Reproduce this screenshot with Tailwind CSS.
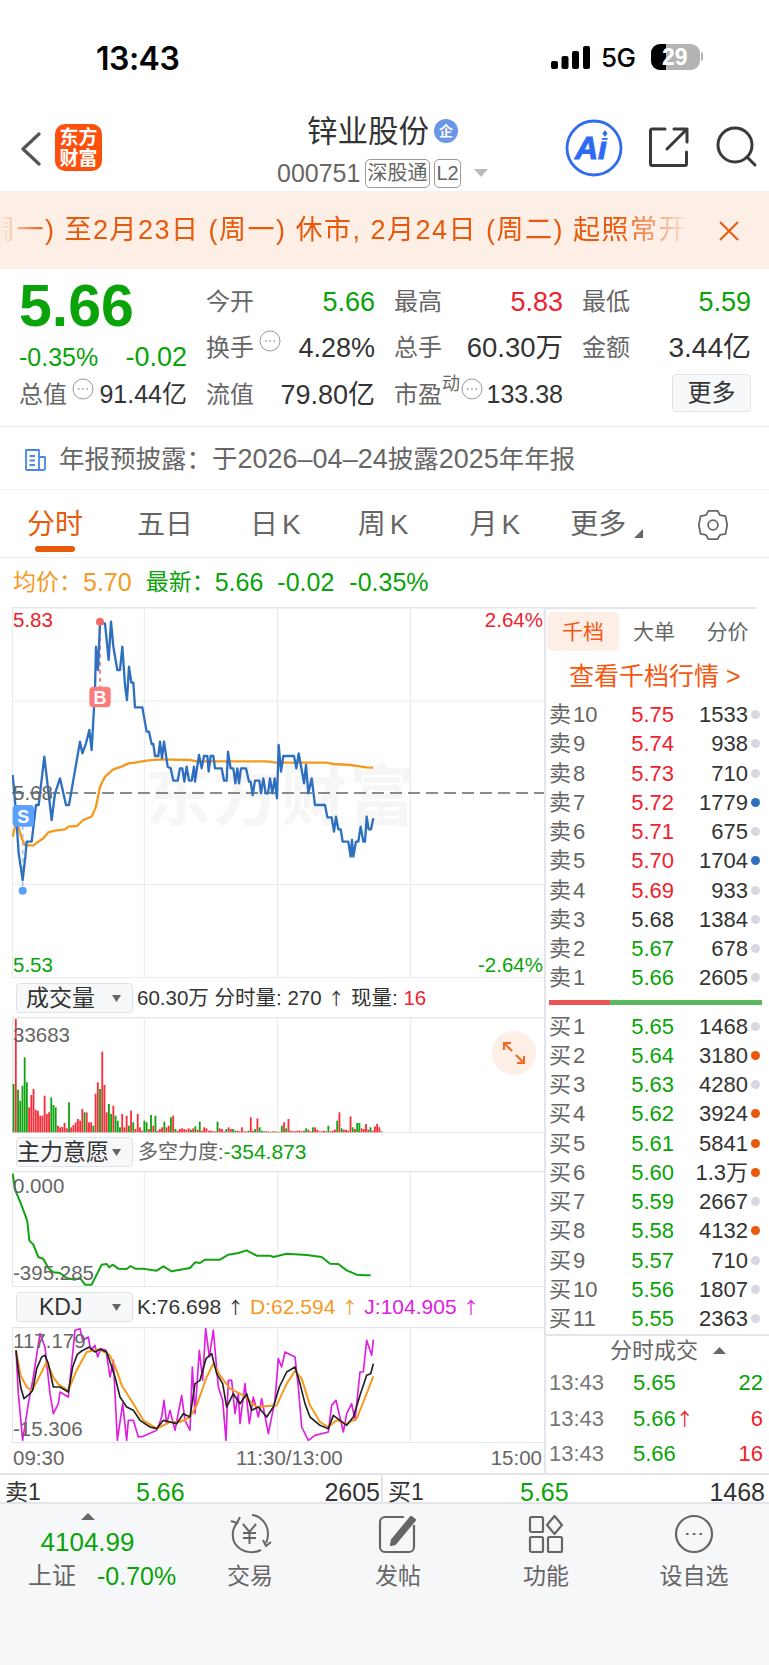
<!DOCTYPE html>
<html lang="zh-CN">
<head>
    <meta charset="UTF-8">
    <meta name="viewport" content="width=device-width, initial-scale=1.0">
    <title>锌业股份</title>
    <script src="https://cdn.jsdelivr.net/npm/@tailwindcss/browser@4"></script>
</head>
<body class="bg-white font-['Liberation_Sans','Noto_Sans_CJK_SC',sans-serif] text-[#333]">
<div class="w-[769px] h-[1665px] overflow-hidden flex flex-col">

    <!-- status bar -->
    <div class="h-[105px] shrink-0 flex items-start pt-[40px] text-black">
        <div class="ml-[96px] w-[90px] h-[38px] leading-[38px] font-['Inter'] font-semibold text-[32px] tracking-[-0.5px]">13:43</div>
        <svg class="ml-[365px] mt-[6px]" width="39" height="23" viewBox="0 0 39 23" fill="#000">
            <rect x="0" y="15" width="7" height="8" rx="2"/><rect x="10.500" y="10" width="7" height="13" rx="2"/><rect x="21" y="5" width="7" height="18" rx="2"/><rect x="32" y="0" width="7" height="23" rx="2"/>
        </svg>
        <div class="ml-[11px] w-[38px] h-[36px] leading-[36px] text-[26px] font-['Inter'] font-medium tracking-[-0.5px]">5G</div>
        <div class="relative ml-[12px] mt-[4px] w-[49px] h-[26px] rounded-[9px] bg-[#b4b4b4] overflow-hidden">
            <div class="absolute left-0 top-0 bottom-0 w-[15px] bg-black"></div>
            <div class="absolute inset-0 pl-[11px] leading-[26px] text-[23px] font-bold text-white">29</div>
        </div>
        <div class="mt-[12px] ml-[1px] w-[2px] h-[9px] rounded-r bg-[#b4b4b4]"></div>
    </div>

    <!-- header -->
    <div class="h-[86px] shrink-0 flex">
        <div class="w-[277px] flex items-start pt-[19px]">
            <svg class="ml-[20px] mt-[8px]" width="22" height="34" viewBox="0 0 22 34" fill="none" stroke="#555" stroke-width="3.200" stroke-linecap="round" stroke-linejoin="round"><path d="M19 2 L3 17 L19 32"/></svg>
            <div class="ml-[13px] w-[47px] h-[47px] rounded-[10px] bg-[#ff4f0d] flex flex-col items-center justify-center text-white font-bold text-[19px] leading-[21px]">
                <span>东方</span><span>财富</span>
            </div>
        </div>
        <div class="w-[289px] flex flex-col pt-[8px]">
            <div class="flex items-center h-[36px]">
                <span class="ml-[30px] text-[30.500px] leading-[36px] text-[#333]">锌业股份</span>
                <span class="ml-[5px] w-[24px] h-[24px] rounded-full bg-[#6b96e8] text-white text-[14px] font-bold flex items-center justify-center">企</span>
            </div>
            <div class="flex items-center mt-[9px] text-[#666]">
                <span class="w-[88px] text-[25px] leading-[30px]">000751</span>
                <span class="w-[65px] h-[29px] border border-[#999] rounded-[5px] text-[20px] leading-[27px] text-center">深股通</span>
                <span class="ml-[4px] w-[27px] h-[29px] border border-[#999] rounded-[5px] text-[20px] leading-[27px] text-center">L2</span>
                <svg class="ml-[13px]" width="14" height="8" viewBox="0 0 14 8"><path d="M0 0 H14 L7 8 Z" fill="#bbb"/></svg>
            </div>
        </div>
        <div class="flex items-start pt-[14px]">
            <svg class="ml-[-1px]" width="58" height="58" viewBox="0 0 58 58">
                <circle cx="29" cy="29" r="27" fill="#fff" stroke="#2f6bf0" stroke-width="2.800"/>
                <text x="10" y="40" font-family="Liberation Sans" font-size="32" font-weight="700" font-style="italic" fill="#2f6bf0" stroke="#2f6bf0" stroke-width="1">Ai</text>
                <rect x="33" y="10" width="13" height="9" fill="#fff"/>
                <path d="M40 11 L42.500 14.500 L40 18 L37.500 14.500 Z" fill="#2f6bf0"/>
            </svg>
            <svg class="ml-[26px] mt-[7px]" width="41" height="42" viewBox="0 0 41 42" fill="none" stroke="#3a3a3a" stroke-width="3" stroke-linejoin="round" stroke-linecap="round">
                <path d="M16 3 H3 a1.500 1.500 0 0 0 -1.500 1.500 V38 a1.500 1.500 0 0 0 1.500 1.500 H36 a1.500 1.500 0 0 0 1.500 -1.500 V26"/>
                <path d="M18 23 L37 4 M25 3 H38 V16"/>
            </svg>
            <svg class="ml-[26px] mt-[7px]" width="42" height="42" viewBox="0 0 42 42" fill="none" stroke="#3a3a3a" stroke-width="3" stroke-linecap="round">
                <circle cx="19" cy="19" r="17"/><path d="M31 31 L39 39"/>
            </svg>
        </div>
    </div>

    <!-- market notice -->
    <div class="h-[78px] shrink-0 bg-[#fdeee6] border-t border-[#f0f0f0] flex items-center relative">
        <div class="w-[690px] overflow-hidden whitespace-nowrap text-[#e8590c] text-[27px] tracking-[1.500px] [mask-image:linear-gradient(to_right,transparent_0,black_45px,black_620px,transparent_690px)]">
            <span class="inline-block ml-[-12px]">周一) 至2月23日 (周一) 休市, 2月24日 (周二) 起照常开市</span>
        </div>
        <svg class="ml-[28px]" width="22" height="22" viewBox="0 0 22 22" fill="none" stroke="#e8590c" stroke-width="2"><path d="M2 2 L20 20 M20 2 L2 20"/></svg>
    </div>

    <!-- quote stats -->
    <div class="h-[158px] shrink-0 pt-[10px] pl-[19px] border-b border-[#eee]">
        <div class="grid grid-cols-[168px_169px_169px_169px] grid-rows-[46px_46px_48px] gap-x-[19px] text-[27px] text-[#666]">
            <div class="row-span-2 flex flex-col text-[#0aa30a] text-[25px]">
                <div class="text-[59px] font-bold leading-[52px] mt-[1px]">5.66</div>
                <div class="flex justify-between items-center mt-[10px] leading-[30px]"><span>-0.35%</span><span class="text-[27px]">-0.02</span></div>
            </div>
            <div class="flex justify-between items-center"><span class="text-[24px]">今开</span><span class="text-[#0aa30a]">5.66</span></div>
            <div class="flex justify-between items-center"><span class="text-[24px]">最高</span><span class="text-[#f0212e]">5.83</span></div>
            <div class="flex justify-between items-center"><span class="text-[24px]">最低</span><span class="text-[#0aa30a]">5.59</span></div>

            <div class="flex justify-between items-center">
                <span class="text-[24px] flex items-start">换手<svg class="ml-[5px]" width="22" height="22" viewBox="0 0 22 22" fill="none" stroke="#999"><circle cx="11" cy="11" r="10"/><path d="M6 11h1.500M10.200 11h1.500M14.500 11h1.500" stroke-width="1.500"/></svg></span>
                <span class="text-[#333]">4.28%</span>
            </div>
            <div class="flex justify-between items-center"><span class="text-[24px]">总手</span><span class="text-[#333] text-[27.500px]">60.30万</span></div>
            <div class="flex justify-between items-center"><span class="text-[24px]">金额</span><span class="text-[#333] text-[28px]">3.44亿</span></div>

            <div class="flex justify-between items-center">
                <span class="text-[24px] flex items-start">总值<svg class="ml-[5px] mt-[1px]" width="22" height="22" viewBox="0 0 22 22" fill="none" stroke="#999"><circle cx="11" cy="11" r="10"/><path d="M6 11h1.500M10.200 11h1.500M14.500 11h1.500" stroke-width="1.500"/></svg></span>
                <span class="text-[#333] text-[25px]">91.44亿</span>
            </div>
            <div class="flex justify-between items-center"><span class="text-[24px]">流值</span><span class="text-[#333]">79.80亿</span></div>
            <div class="flex justify-between items-center">
                <span class="text-[24px] flex items-start">市盈<span class="text-[18px] leading-[22px] mt-[-4px]">动</span><svg class="mt-[1px] ml-[1px]" width="22" height="22" viewBox="0 0 22 22" fill="none" stroke="#999"><circle cx="11" cy="11" r="10"/><path d="M6 11h1.500M10.200 11h1.500M14.500 11h1.500" stroke-width="1.500"/></svg></span>
                <span class="text-[#333] text-[25px] ml-[-4px]">133.38</span>
            </div>
            <div class="flex justify-end items-center">
                <button class="w-[79px] h-[38px] mb-[4px] rounded-[4px] bg-[#f7f8fa] border border-[#dfe2e7] text-[24px] text-[#333]">更多</button>
            </div>
        </div>
    </div>

    <!-- disclosure notice -->
    <div class="h-[63px] shrink-0 flex items-center pl-[24px] pt-[3px] border-b border-[#eee] text-[25.500px] text-[#666]">
        <svg width="23" height="24" viewBox="0 0 23 24" fill="none" stroke="#4a86e8" stroke-width="1.800" stroke-linejoin="round"><path d="M2 2 H15 V22 H3 a1 1 0 0 1 -1 -1 Z M15 9 H21 V20 a2 2 0 0 1 -2 2 H15 M5.500 8 H11 M5.500 12.500 H11 M5.500 17 H11"/></svg>
        <span class="ml-[12px]">年报预披露：于<span class="text-[27px]">2026–04–24</span>披露<span class="text-[27px]">2025</span>年年报</span>
    </div>

    <!-- period tabs -->
    <div class="h-[68px] shrink-0 relative flex items-center pl-[27px] pt-[3px] border-b border-[#eee] text-[28px] text-[#666]">
        <span class="text-[#e8590c]">分时</span>
        <span class="ml-[54px]">五日</span>
        <span class="ml-[57px]">日<span class="ml-[4px]">K</span></span>
        <span class="ml-[57px]">周<span class="ml-[4px]">K</span></span>
        <span class="ml-[61px]">月<span class="ml-[4px]">K</span></span>
        <span class="ml-[50px]">更多</span>
        <svg class="ml-[8px] mt-[16px]" width="9" height="9" viewBox="0 0 9 9"><path d="M9 0 V9 H0 Z" fill="#666"/></svg>
        <svg class="ml-[54px]" width="32" height="32" viewBox="0 0 34 36" fill="none" stroke="#666" stroke-width="2"><path d="M12 2 H22 L25 7 L31 8 L33 18 L31 28 L25 29 L22 34 H12 L9 29 L3 28 L1 18 L3 8 L9 7 Z" stroke-linejoin="round"/><circle cx="17" cy="18" r="5.500"/></svg>
        <div class="absolute left-[35px] bottom-[5px] w-[40px] h-[6px] rounded-full bg-[#e8590c]"></div>
    </div>

    <!-- chart + order book -->
    <div class="flex-1 flex min-h-0">
        <div class="w-[544px] shrink-0">
            <div class="h-[49px] flex items-center pl-[13px] text-[23px] text-[#0aa30a]">
                <span class="text-[#f5991f]">均价：</span><span class="text-[#f5991f] ml-[1px] text-[25px]">5.70</span>
                <span class="ml-[14px]">最新：</span><span class="text-[25px]">5.66</span>
                <span class="text-[25px] ml-[14px]">-0.02</span><span class="text-[25px] ml-[15px]">-0.35%</span>
            </div>

            <!-- price chart -->
            <div class="relative ml-[12px] w-[532px] h-[371px]">
                <div class="absolute left-[133px] top-[155px] text-[66px] leading-[70px] font-bold text-[#f6f6f6] tracking-[2px]">东方财富</div>
                <svg class="absolute inset-0" width="532" height="371" viewBox="36 51 1596 1113" fill="none">
                    <path d="M36 53 H1632 M36 1164 H1632 M36 51 V1164" stroke="#e3e5ea" stroke-width="5"/>
                    <path d="M36 333 H1632 M36 883 H1632 M433 51 V1160 M832 51 V1160 M1231 51 V1160" stroke="#e6e8f0" stroke-width="3"/>
                    <path d="M36 609 H1632" stroke="#666" stroke-width="5" stroke-dasharray="36 18"/>
                    <path d="M300 95 V292" stroke="#f26a6a" stroke-width="5" stroke-dasharray="12 12"/>
                    <path d="M68 708 V902" stroke="#9cc4ff" stroke-width="5" stroke-dasharray="12 12"/>
                    <polyline stroke="#f5991f" stroke-width="7" points="38,740 45,710 55,710 65,745 75,765 100,767 115,755 130,745 145,727 165,722 195,718 205,710 230,708 250,690 275,680 288,650 300,590 315,560 340,538 365,530 385,520 405,518 440,512 480,508 570,510 590,514 800,514 830,518 980,518 1000,522 1050,525 1100,532 1120,533"/>
                    <polyline stroke="#2f6fc0" stroke-width="7" stroke-linejoin="round" points="38,555 44,620 50,700 56,790 68,870 76,800 80,755 95,755 108,645 116,645 133,500 155,690 165,610 180,565 198,645 207,645 240,455 247,490 258,460 268,420 275,480 285,300 288,170 294,240 300,100 315,100 326,210 333,95 340,170 352,240 360,240 367,170 375,285 381,330 387,230 394,278 400,278 405,352 427,352 440,425 447,425 455,462 460,462 465,498 475,498 480,455 486,505 492,455 503,530 512,535 520,572 533,572 540,535 547,535 553,575 560,530 567,572 575,572 582,530 585,575 597,495 605,535 612,498 622,498 626,545 632,498 640,498 645,535 665,535 672,572 680,572 684,485 692,535 700,535 706,580 712,535 717,580 723,535 738,535 747,575 752,575 758,615 765,572 778,572 783,610 790,565 797,610 804,610 810,565 817,610 824,565 831,625 836,465 843,545 850,498 882,498 889,535 896,490 906,545 912,580 918,525 925,610 935,565 945,645 975,645 982,682 995,682 1002,725 1008,680 1015,718 1022,718 1028,755 1045,755 1052,800 1056,750 1060,800 1068,755 1075,755 1082,710 1090,755 1095,755 1100,680 1106,718 1113,718 1120,685"/>
                    <circle cx="300" cy="95" r="12" fill="#f26a6a"/>
                    <circle cx="68" cy="902" r="12" fill="#5aa0ff"/>
                    <rect x="268" y="290" width="64" height="62" rx="12" fill="#fb7c7c"/>
                    <text x="300" y="343" text-anchor="middle" font-family="Liberation Sans" font-size="54" font-weight="700" fill="#fff">B</text>
                    <rect x="38" y="645" width="64" height="65" rx="12" fill="#5aa0ff"/>
                    <text x="70" y="698" text-anchor="middle" font-family="Liberation Sans" font-size="54" font-weight="700" fill="#fff">S</text>
                </svg>
                <span class="absolute left-[1px] top-[1px] text-[20.500px] leading-[24px] text-[#f0212e]">5.83</span>
                <span class="absolute right-[1px] top-[1px] text-[20.500px] leading-[24px] text-[#f0212e]">2.64%</span>
                <span class="absolute left-[1px] top-[174px] text-[20.500px] leading-[24px] text-[#666]">5.68</span>
                <span class="absolute left-[1px] top-[346px] text-[20.500px] leading-[24px] text-[#0aa30a]">5.53</span>
                <span class="absolute right-[1px] top-[346px] text-[20.500px] leading-[24px] text-[#0aa30a]">-2.64%</span>
            </div>

            <!-- volume -->
            <div class="h-[39px] flex items-center pl-[16px] pt-[1px] text-[20.500px] text-[#333] whitespace-nowrap">
                <div class="w-[117px] h-[30px] rounded-[4px] bg-[#f7f8fa] border border-[#dfe2e8] flex items-center justify-between pl-[9px] pr-[11px] text-[23px]">成交量<svg width="9" height="7" viewBox="0 0 9 7"><path d="M0 0 H9 L4.500 7 Z" fill="#666"/></svg></div>
                <span class="ml-[4px]">60.30万 分时量: 270 <span class="inline-block w-[18px] text-center text-[17px] font-['Noto_Sans_CJK_SC']">↑</span> 现量: <span class="text-[#f0212e]">16</span></span>
            </div>
            <div class="relative ml-[12px] w-[532px] h-[116px]">
                <svg class="absolute inset-0" width="532" height="116" viewBox="36 142 1596 348" fill="none">
                    <path d="M36 144 H1632 M36 489 H1632 M37 142 V490" stroke="#e3e5ea" stroke-width="4"/>
                    <path d="M433 142 V488 M832 142 V488 M1231 142 V488" stroke="#e6e8f0" stroke-width="3"/>
                    <g id="vol"></g>
                </svg>
                <span class="absolute left-[1px] top-[6px] text-[20.500px] leading-[24px] text-[#666]">33683</span>
                <div class="absolute left-[480px] top-[14px] w-[44px] h-[44px] rounded-full bg-[#fdeee6] flex items-center justify-center">
                    <svg width="24" height="24" viewBox="0 0 24 24" fill="none" stroke="#f5691f" stroke-width="2"><path d="M2 9 V2 H9 M2 2 L10 10 M22 15 V22 H15 M22 22 L14 14"/></svg>
                </div>
            </div>

            <!-- main force -->
            <div class="h-[38px] flex items-center pl-[16px] text-[20px] text-[#666] whitespace-nowrap">
                <div class="w-[117px] h-[30px] rounded-[4px] bg-[#f7f8fa] border border-[#dfe2e8] flex items-center justify-between pr-[11px] text-[23px] text-[#333]">主力意愿<svg width="9" height="7" viewBox="0 0 9 7"><path d="M0 0 H9 L4.500 7 Z" fill="#666"/></svg></div>
                <span class="ml-[5px]">多空力度:<span class="text-[#0aa30a] text-[21px]">-354.873</span></span>
            </div>
            <div class="relative ml-[12px] w-[532px] h-[116px]">
                <svg class="absolute inset-0" width="532" height="116" viewBox="36 604 1596 348" fill="none">
                    <path d="M36 606 H1632 M36 951 H1632 M37 604 V952" stroke="#e3e5ea" stroke-width="4"/>
                    <path d="M433 604 V950 M832 604 V950 M1231 604 V950" stroke="#e6e8f0" stroke-width="3"/>
                    <polyline stroke="#12a312" stroke-width="6" stroke-linejoin="round" points="38,612 45,660 60,695 75,735 82,755 88,812 100,825 115,862 130,868 145,895 160,908 180,910 200,925 225,930 240,925 255,945 275,945 290,915 305,885 320,883 328,893 338,885 355,897 380,898 392,889 405,897 430,897 470,903 490,890 515,905 570,895 585,878 600,880 615,870 660,870 685,855 715,850 740,842 770,858 810,858 820,862 860,852 920,856 965,862 990,882 1015,883 1040,902 1070,915 1095,917 1112,917"/>
                </svg>
                <span class="absolute left-[1px] top-[3px] text-[20.500px] leading-[24px] text-[#666]">0.000</span>
                <span class="absolute left-[1px] top-[90px] text-[20.500px] leading-[24px] text-[#666]">-395.285</span>
            </div>

            <!-- KDJ -->
            <div class="h-[40px] flex items-center pl-[16px] text-[21px] text-[#333] whitespace-nowrap">
                <div class="w-[117px] h-[30px] rounded-[4px] bg-[#f7f8fa] border border-[#dfe2e8] flex items-center justify-between pl-[22px] pr-[11px] text-[23px]">KDJ<svg width="9" height="7" viewBox="0 0 9 7"><path d="M0 0 H9 L4.500 7 Z" fill="#666"/></svg></div>
                <span class="ml-[4px]">K:76.698<span class="inline-block w-[29px] text-center text-[17px] font-['Noto_Sans_CJK_SC']">↑</span><span class="text-[#f5991f]">D:62.594<span class="inline-block w-[29px] text-center text-[17px] font-['Noto_Sans_CJK_SC']">↑</span></span><span class="text-[#e020e0]">J:104.905<span class="inline-block w-[29px] text-center text-[17px] font-['Noto_Sans_CJK_SC']">↑</span></span></span>
            </div>
            <div class="relative ml-[12px] w-[532px] h-[116px]">
                <svg class="absolute inset-0" width="532" height="116" viewBox="36 140 1596 348" fill="none">
                    <path d="M36 142 H1632 M36 487 H1632 M37 140 V488" stroke="#e3e5ea" stroke-width="4"/>
                    <path d="M433 140 V486 M832 140 V486 M1231 140 V486" stroke="#e6e8f0" stroke-width="3"/>
                    <polyline stroke="#e020e0" stroke-width="5" stroke-linejoin="round" points="48,210 55,340 68,480 85,370 100,290 120,160 135,200 150,340 160,400 175,370 180,335 205,350 225,150 240,145 248,180 265,170 272,210 285,195 293,230 302,205 318,210 330,290 340,240 352,480 368,370 380,480 385,420 400,420 415,470 430,468 470,450 478,430 485,410 492,360 500,430 510,390 525,450 545,345 555,420 570,450 577,260 585,400 598,210 608,300 617,145 628,230 640,150 655,320 668,360 678,480 685,300 695,300 705,400 715,340 720,430 735,310 748,430 760,350 775,410 785,355 805,460 825,360 835,235 845,260 855,215 885,230 895,320 905,440 925,480 945,465 985,455 995,375 1008,360 1030,455 1040,400 1055,370 1065,420 1080,275 1090,275 1100,180 1115,225 1120,178"/>
                    <polyline stroke="#f5991f" stroke-width="6" stroke-linejoin="round" points="48,210 62,285 80,320 95,332 115,295 140,245 160,290 175,312 205,330 230,270 260,215 300,207 330,225 350,270 365,315 400,370 430,420 470,445 510,425 540,425 570,410 590,375 620,290 640,250 660,285 690,325 730,345 770,380 830,375 860,310 885,272 905,295 930,375 960,425 985,440 1010,420 1040,430 1070,415 1090,365 1120,288"/>
                    <polyline stroke="#222" stroke-width="5" stroke-linejoin="round" points="48,210 55,270 62,320 72,355 90,340 98,330 110,265 125,230 135,225 145,250 160,320 180,320 205,335 218,260 232,222 245,212 268,200 285,215 300,207 320,215 345,290 360,350 380,380 400,390 420,420 450,440 470,445 490,420 510,425 530,430 550,400 570,410 585,310 600,300 618,235 635,220 650,280 668,310 680,380 700,340 720,370 740,340 755,390 775,380 800,410 820,380 838,320 860,275 885,260 900,310 915,370 930,410 960,435 985,445 1000,405 1020,420 1040,435 1060,410 1080,345 1100,285 1112,280 1120,250"/>
                </svg>
                <span class="absolute left-[1px] top-[2px] text-[20.500px] leading-[24px] text-[#666]">117.179</span>
                <span class="absolute left-[1px] top-[90px] text-[20.500px] leading-[24px] text-[#666]">-15.306</span>
            </div>
            <div class="relative h-[29px] ml-[12px] w-[532px] text-[20.500px] leading-[29px] text-[#666]">
                <span class="absolute left-[1px]">09:30</span>
                <span class="absolute left-[224px]">11:30/13:00</span>
                <span class="absolute right-[2px]">15:00</span>
            </div>
        </div>

        <!-- order book -->
        <div class="flex-1 mt-[49px] border-l-2 border-[#e3e5ea] flex flex-col min-w-0">
            <div class="h-[44px] border-t-2 border-[#e3e5ea] pl-[1px] pt-[3px] flex items-stretch text-[21px] text-[#666] mr-[13px]">
                <div class="w-[72px] shrink-0 h-[39px] rounded-[6px] bg-[#fdeee6] text-[#f5570f] flex items-center justify-center">千档</div>
                <div class="w-[70px] shrink-0 flex items-center justify-center">大单</div>
                <div class="w-[77px] shrink-0 flex items-center justify-center">分价</div>
            </div>
            <div class="h-[47px] flex items-center pl-[23px] pt-[5px] text-[25px] text-[#f5570f]">查看千档行情 &gt;</div>
            <div id="sell"></div>
            <div class="flex h-[5px] mt-[9px] ml-[3px] mr-[7px]">
                <div class="w-[61px] bg-[#ea5455]"></div><div class="flex-1 bg-[#5cb85c]"></div>
            </div>
            <div id="buy" class="mt-[5px]"></div>
            <div class="mt-[3px] border-t-2 border-[#e3e5ea] h-[31px] flex items-center pl-[64px] text-[22px] text-[#666]">
                <span>分时成交</span>
                <svg class="ml-[15px]" width="13" height="7" viewBox="0 0 13 7"><path d="M0 7 H13 L6.500 0 Z" fill="#666"/></svg>
            </div>
            <div class="h-[35px] flex items-center pl-[3px] pr-[6px] text-[22px]">
                <span class="w-[84px] text-[#777]">13:43</span><span class="text-[#0aa30a]">5.65</span><span class="ml-auto text-[#0aa30a]">22</span>
            </div>
            <div class="h-[36px] flex items-center pl-[3px] pr-[6px] text-[22px]">
                <span class="w-[84px] text-[#777]">13:43</span><span class="text-[#0aa30a]">5.66</span><span class="text-[#f0212e] text-[18px] font-['Noto_Sans_CJK_SC']">↑</span><span class="ml-auto text-[#f0212e]">6</span>
            </div>
            <div class="h-[35px] flex items-center pl-[3px] pr-[6px] text-[22px]">
                <span class="w-[84px] text-[#777]">13:43</span><span class="text-[#0aa30a]">5.66</span><span class="ml-auto text-[#f0212e]">16</span>
            </div>
        </div>
    </div>

    <!-- best bid / ask -->
    <div class="h-[31px] shrink-0 flex border-y-2 border-[#e3e5ea] text-[25px] leading-[26px]">
        <div class="w-[383px] relative border-r-2 border-[#e3e5ea]">
            <span class="absolute left-[5px] top-[4px] text-[#333] text-[23px]">卖1</span>
            <span class="absolute left-[136px] top-[4px] text-[#0aa30a]">5.66</span>
            <span class="absolute right-[1px] top-[4px] text-[#333]">2605</span>
        </div>
        <div class="flex-1 relative">
            <span class="absolute left-[5px] top-[4px] text-[#333] text-[23px]">买1</span>
            <span class="absolute left-[137px] top-[4px] text-[#0aa30a]">5.65</span>
            <span class="absolute right-[4px] top-[4px] text-[#333]">1468</span>
        </div>
    </div>

    <!-- bottom nav -->
    <div class="h-[161px] shrink-0 bg-[#f6f7f9] flex text-[23px] text-[#666]">
        <div class="w-[176px] flex flex-col items-center pt-[9px]">
            <svg width="14" height="7" viewBox="0 0 14 7"><path d="M0 7 H14 L7 0 Z" fill="#666"/></svg>
            <div class="mt-[6px] ml-[-1px] text-[26px] leading-[32px] text-[#0aa30a]">4104.99</div>
            <div class="flex items-center mt-[2px] leading-[32px] ml-[28px] self-start whitespace-nowrap">
                <span class="text-[24px]">上证</span><span class="ml-[21px] text-[25px] text-[#0aa30a]">-0.70%</span>
            </div>
        </div>
        <div class="w-[148px] flex flex-col items-center pt-[9px]">
            <svg width="44" height="42" viewBox="0 0 44 42" fill="none" stroke="#666" stroke-width="2">
                <path d="M10 9 C3 16 3 28 10 34 C15 39 25 41 33 37"/><path d="M24 2 C33 3 40 11 40 21 C40 25 39 28 38 30"/>
                <path d="M3 8 L9 10 L12 4 M35 27 L38 33 L43 29" stroke-linejoin="round"/>
                <path d="M15 11 L21.500 19 L28 11 M21.500 19 V31 M15 20 H28 M15 25 H28"/>
            </svg>
            <span class="mt-[5px] leading-[32px]">交易</span>
        </div>
        <div class="w-[148px] flex flex-col items-center pt-[9px]">
            <svg width="42" height="42" viewBox="0 0 42 42" fill="none" stroke="#666" stroke-width="2.200">
                <path d="M27 4 H8 a5 5 0 0 0 -5 5 V34 a5 5 0 0 0 5 5 H32 a5 5 0 0 0 5 -5 V12"/>
                <path d="M15 27 L34 4 L38 7 L18 31 L14 32 Z" fill="#666" stroke-linejoin="round"/>
            </svg>
            <span class="mt-[5px] leading-[32px]">发帖</span>
        </div>
        <div class="w-[148px] flex flex-col items-center pt-[9px]">
            <svg width="36" height="42" viewBox="0 0 36 42" fill="none" stroke="#666" stroke-width="2.200" stroke-linejoin="round">
                <rect x="2" y="4" width="13" height="15" rx="1.500"/><rect x="2" y="24" width="13" height="15" rx="1.500"/><rect x="20" y="24" width="14" height="15" rx="1.500"/>
                <path d="M26.500 3 L34 12 L26.500 21 L19 12 Z"/>
            </svg>
            <span class="mt-[5px] leading-[32px]">功能</span>
        </div>
        <div class="w-[148px] flex flex-col items-center pt-[9px]">
            <svg width="40" height="42" viewBox="0 0 40 42" fill="none" stroke="#666" stroke-width="2.200">
                <circle cx="20" cy="21" r="18"/><path d="M12 21h2.500M18.800 21h2.500M25.500 21h2.500"/>
            </svg>
            <span class="mt-[5px] leading-[32px]">设自选</span>
        </div>
    </div>
</div>

<script>
    // volume bars, positive = up (red), negative = down (green), units follow the svg viewBox
    var vols = [-145,340,-128,-95,-140,-225,-150,75,112,130,68,65,50,50,110,55,60,-105,-82,-75,20,15,16,28,12,-90,15,22,30,40,35,70,-60,60,30,30,-20,116,150,-130,242,142,60,-85,-55,80,-50,-35,-15,55,15,50,-20,65,-30,10,55,15,5,-35,-30,10,-52,20,-50,5,10,15,-32,15,20,-45,50,-10,5,10,12,10,8,12,-8,12,-18,8,-32,5,15,12,5,5,3,3,-32,12,10,3,-10,15,10,-10,-5,5,3,15,3,3,-5,45,5,-10,42,-15,-5,-3,3,3,2,3,-3,2,2,-20,30,-12,40,5,3,3,5,5,3,-5,-12,8,3,-15,15,8,3,3,5,3,-20,3,5,8,-35,60,-12,8,8,5,48,-15,10,-28,-28,12,10,25,8,-15,5,18,25,15,3];
    var volGroup = document.getElementById("vol");
    vols.forEach(function (v, i) {
        var rect = document.createElementNS("http://www.w3.org/2000/svg", "rect");
        rect.setAttribute("x", 38 + i * 6.65);
        rect.setAttribute("y", 488 - Math.abs(v));
        rect.setAttribute("width", 5.5);
        rect.setAttribute("height", Math.abs(v));
        rect.setAttribute("fill", v > 0 ? "#f5303a" : "#12a312");
        volGroup.appendChild(rect);
    });

    // order book rows: label, price, price colour, size, dot colour
    var red = "text-[#f0212e]", green = "text-[#0aa30a]", dark = "text-[#333]";
    var gray = "bg-[#d5d8de]", blue = "bg-[#2f6fc0]", orange = "bg-[#e8590c]";
    var sell = [
        ["卖10", "5.75", red, "1533", gray], ["卖9", "5.74", red, "938", gray], ["卖8", "5.73", red, "710", gray],
        ["卖7", "5.72", red, "1779", blue], ["卖6", "5.71", red, "675", gray], ["卖5", "5.70", red, "1704", blue],
        ["卖4", "5.69", red, "933", gray], ["卖3", "5.68", dark, "1384", gray], ["卖2", "5.67", green, "678", gray],
        ["卖1", "5.66", green, "2605", gray]
    ];
    var buy = [
        ["买1", "5.65", green, "1468", gray], ["买2", "5.64", green, "3180", orange], ["买3", "5.63", green, "4280", gray],
        ["买4", "5.62", green, "3924", orange], ["买5", "5.61", green, "5841", orange], ["买6", "5.60", green, "1.3万", orange],
        ["买7", "5.59", green, "2667", gray], ["买8", "5.58", green, "4132", orange], ["买9", "5.57", green, "710", gray],
        ["买10", "5.56", green, "1807", gray], ["买11", "5.55", green, "2363", gray]
    ];
    function rows(list) {
        return list.map(function (r) {
            return '<div class="h-[29.25px] pl-[3px] grid grid-cols-[72px_53px_74px_12px] items-center text-[22px]">' +
                '<span class="text-[#666]">' + r[0].charAt(0) + '<span class="ml-[2px]">' + r[0].slice(1) + '</span></span>' +
                '<span class="text-right ' + r[2] + '">' + r[1] + '</span>' +
                '<span class="text-right text-[#333]">' + r[3] + '</span>' +
                '<span class="justify-self-end w-[9px] h-[9px] rounded-full ' + r[4] + '"></span></div>';
        }).join("");
    }
    document.getElementById("sell").innerHTML = rows(sell);
    document.getElementById("buy").innerHTML = rows(buy);
</script>
</body>
</html>
